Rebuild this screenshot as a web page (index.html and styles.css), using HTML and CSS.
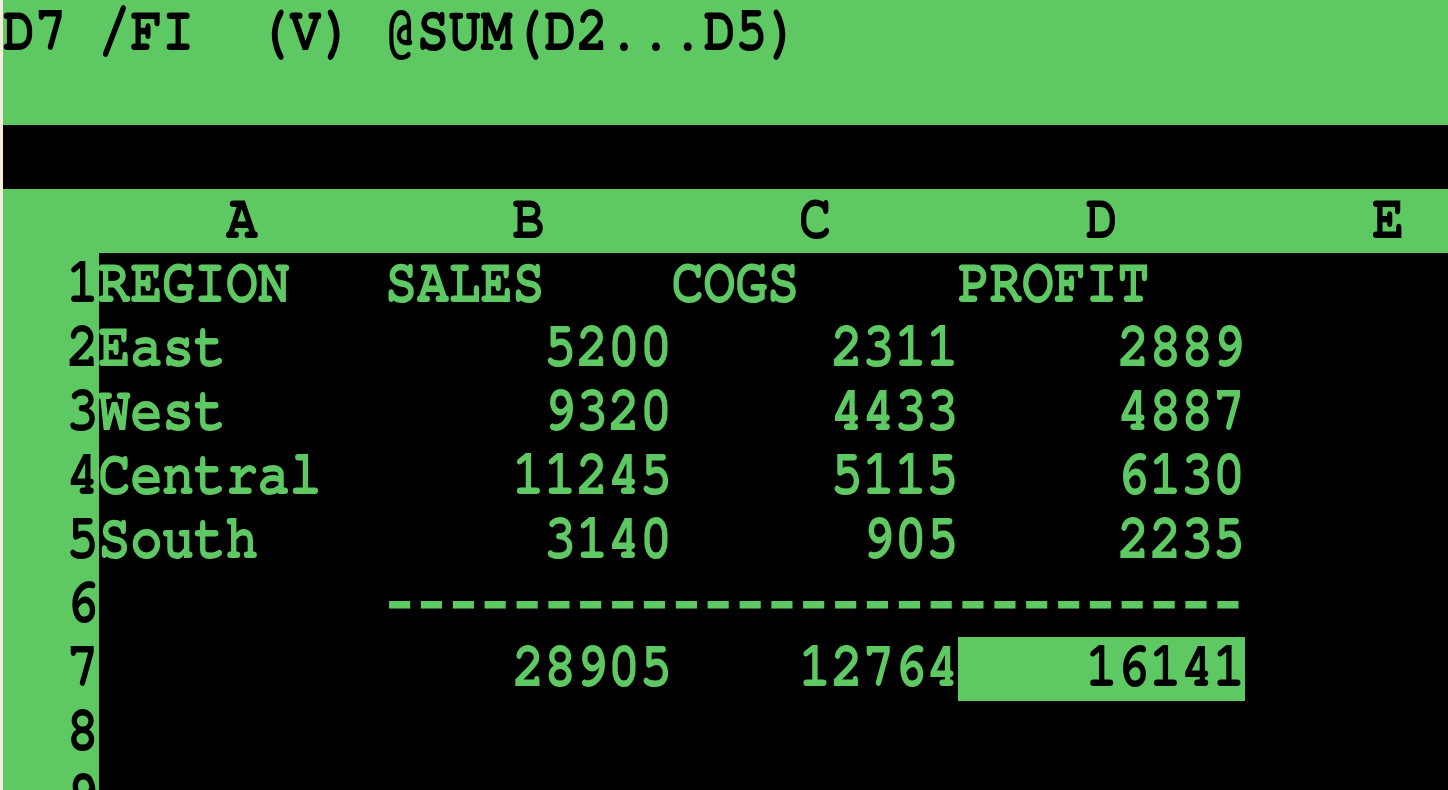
FILE: index.html
```html
<!DOCTYPE html>
<html>
<head>
<meta charset="utf-8">
<link rel="stylesheet" href="styles.css">
</head>
<body>
<div class="screen">
  <div class="top">
    <div class="line status"><span class="t">D7 /FI  (V) @SUM(D2...D5)</span></div>
  </div>
  <div class="edit"></div>
  <div class="row head">
    <div class="rn"></div>
    <div class="c ctr"><span class="t">A</span></div>
    <div class="c ctr"><span class="t">B</span></div>
    <div class="c ctr"><span class="t">C</span></div>
    <div class="c ctr"><span class="t">D</span></div>
    <div class="c ctr"><span class="t">E</span></div>
  </div>
  <div class="row">
    <div class="rn"><span class="t">1</span></div>
    <div class="c"><span class="t">REGION</span></div>
    <div class="c"><span class="t">SALES</span></div>
    <div class="c"><span class="t">COGS</span></div>
    <div class="c"><span class="t">PROFIT</span></div>
    <div class="c"></div>
  </div>
  <div class="row">
    <div class="rn"><span class="t">2</span></div>
    <div class="c"><span class="t">East</span></div>
    <div class="c r"><span class="t">5200</span></div>
    <div class="c r"><span class="t">2311</span></div>
    <div class="c r"><span class="t">2889</span></div>
    <div class="c"></div>
  </div>
  <div class="row">
    <div class="rn"><span class="t">3</span></div>
    <div class="c"><span class="t">West</span></div>
    <div class="c r"><span class="t">9320</span></div>
    <div class="c r"><span class="t">4433</span></div>
    <div class="c r"><span class="t">4887</span></div>
    <div class="c"></div>
  </div>
  <div class="row">
    <div class="rn"><span class="t">4</span></div>
    <div class="c"><span class="t">Central</span></div>
    <div class="c r"><span class="t">11245</span></div>
    <div class="c r"><span class="t">5115</span></div>
    <div class="c r"><span class="t">6130</span></div>
    <div class="c"></div>
  </div>
  <div class="row">
    <div class="rn"><span class="t">5</span></div>
    <div class="c"><span class="t">South</span></div>
    <div class="c r"><span class="t">3140</span></div>
    <div class="c r"><span class="t">905</span></div>
    <div class="c r"><span class="t">2235</span></div>
    <div class="c"></div>
  </div>
  <div class="row">
    <div class="rn"><span class="t">6</span></div>
    <div class="c"></div>
    <div class="c3"><span class="dash">---------------------------</span></div>
    <div class="c"></div>
  </div>
  <div class="row">
    <div class="rn"><span class="t">7</span></div>
    <div class="c"></div>
    <div class="c r"><span class="t">28905</span></div>
    <div class="c r"><span class="t">12764</span></div>
    <div class="c r hl"><span class="t">16141</span></div>
    <div class="c"></div>
  </div>
  <div class="row">
    <div class="rn"><span class="t">8</span></div>
    <div class="c"></div>
  </div>
  <div class="row">
    <div class="rn"><span class="t">9</span></div>
    <div class="c"></div>
  </div>
</div>
</body>
</html>
```
FILE: styles.css
```css
html, body {
  margin: 0;
  padding: 0;
}
body {
  background: #f5eddb;
  overflow: hidden;
}
.screen {
  margin-left: 3px;
  height: 790px;
  background: #000;
  overflow: hidden;
  font-family: "FreeMono", "Liberation Mono", monospace;
  font-weight: bold;
  font-size: 53.08px;
  color: #5ec962;
}
.top {
  height: 125px;
  background: #5ec962;
  color: #000;
}
.line {
  height: 64px;
  line-height: 64px;
  white-space: pre;
}
.edit {
  height: 64px;
}
.row {
  display: flex;
  height: 64px;
  line-height: 64px;
  white-space: pre;
}
.head {
  background: #5ec962;
  color: #000;
}
.rn {
  width: 3ch;
  flex: none;
  text-align: right;
  background: #5ec962;
  color: #000;
}
.c {
  width: 9ch;
  flex: none;
}
.c3 {
  width: 27ch;
  flex: none;
}
.r {
  text-align: right;
}
.ctr {
  text-align: center;
}
.hl {
  background: #5ec962;
  color: #000;
}
.t {
  display: inline-block;
  height: 64px;
  vertical-align: top;
  transform: scaleY(1.21);
  transform-origin: 0 36.2px;
}
.status .t {
  transform: translateY(1px) scaleY(1.21);
}
.dash {
  display: inline-block;
  height: 64px;
  line-height: 64px;
  vertical-align: top;
  font-family: "Liberation Mono", monospace;
  letter-spacing: -7.35px;
  margin-left: -6px;
  transform: scaleX(1.3);
  transform-origin: 0 0;
  -webkit-text-stroke: 1.2px currentColor;
}
```
